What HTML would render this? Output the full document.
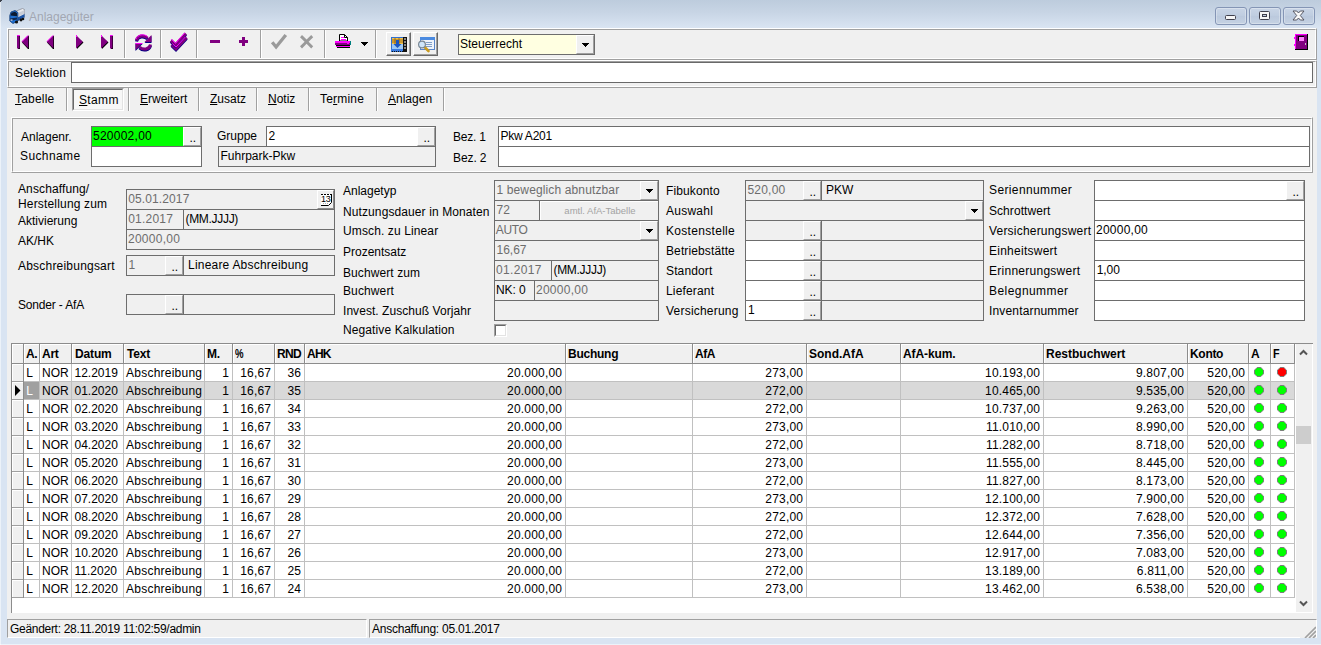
<!DOCTYPE html>
<html lang="de"><head><meta charset="utf-8"><title>Anlagegüter</title>
<style>
html,body{margin:0;padding:0;}
body{width:1321px;height:645px;overflow:hidden;position:relative;background:#d9e4f2;font-family:"Liberation Sans",sans-serif;font-size:12px;line-height:14px;color:#000;}
div,span,svg{position:absolute;box-sizing:content-box;}
.t,.g,.tb,.tab{white-space:nowrap;}
.tb{font-weight:bold;}
.f{border:1px solid #6d6d6d;overflow:hidden;background:#fff;}
.f span{top:2px;white-space:nowrap;}
.db{width:16px;height:17px;background:#f0f0f0;border:1px solid;border-color:#fff #a0a0a0 #a0a0a0 #fff;}
.dd{left:1.500px;right:0;top:3px;text-align:center;}
.ar{left:5px;top:7px;}
.po{border:1px solid;border-color:#fff #a0a0a0 #a0a0a0 #fff;}
.pi{border:1px solid;border-color:#a0a0a0 #fff #fff #a0a0a0;}
.sep{width:1px;background:#a0a0a0;border-right:1px solid #fff;}
.hl{height:1px;background:#c0c0c0;}
.vl{width:1px;background:#c0c0c0;}
.dot{width:10px;height:10px;}
.st{font-size:12px;line-height:16px;white-space:nowrap;}
</style></head><body>

<div style="left:0px;top:0px;width:1321px;height:28px;background:linear-gradient(#bdccdd,#c8d5e5 45%,#d9e4f2);"></div>
<div style="left:0px;top:0px;width:1px;height:645px;background:rgba(255,255,255,.5);"></div>
<div style="left:0px;top:644px;width:1321px;height:1px;background:rgba(255,255,255,.5);"></div>
<div style="left:0px;top:0px;width:2px;height:1px;background:#3a3f4a;"></div>
<div style="left:0px;top:1px;width:1px;height:1px;background:#3a3f4a;"></div>
<div style="left:7px;top:28px;width:1310px;height:610px;background:#f0f0f0;"></div>
<svg style="left:9px;top:8px" width="16" height="16" viewBox="0 0 16 16">
<path d="M6 3.500L13.500 .5l2 1v8l-7 3.500z" fill="#e8eaee" stroke="#8a8f99" stroke-width=".8"/>
<path d="M8.500 5.200l7-3.200v3.500l-7 3.500z" fill="#c9ced8"/>
<path d="M8.500 9.500l7-3.500v3.200l-7 3.800z" fill="#1c55a8"/>
<path d="M.8 7.500L2 4l4-1.500 2.800 1.800v8.700L4 15.500.8 13z" fill="#1f6fd0" stroke="#123a73" stroke-width=".8"/>
<path d="M1.500 7.500l1-2.800 3.500-1 2 1.500v3z" fill="#0c1a30"/>
<path d="M1 10.500l7-1v2l-7 1.500z" fill="#0f2a55"/>
<circle cx="7.500" cy="14" r="1.600" fill="#111"/><circle cx="12" cy="12" r="1.400" fill="#111"/><circle cx="14" cy="11" r="1.300" fill="#111"/>
<rect x="1.500" y="11.500" width="2" height="1.200" fill="#dfe9ff"/>
</svg>
<span style="left:29px;top:10px;font-size:12px;line-height:14px;color:#a2a7b2;white-space:nowrap;">Anlagegüter</span>
<div style="left:1215px;top:7px;width:30px;height:16px;border:1px solid #8495b5;border-radius:3px;background:linear-gradient(#c9d5e6,#bfcde0 48%,#bbc9dd 52%,#c5d2e3);box-shadow:inset 0 0 0 1px rgba(255,255,255,.3);"></div>
<div style="left:1249px;top:7px;width:30px;height:16px;border:1px solid #8495b5;border-radius:3px;background:linear-gradient(#c9d5e6,#bfcde0 48%,#bbc9dd 52%,#c5d2e3);box-shadow:inset 0 0 0 1px rgba(255,255,255,.3);"></div>
<div style="left:1283px;top:7px;width:30px;height:16px;border:1px solid #8495b5;border-radius:3px;background:linear-gradient(#c9d5e6,#bfcde0 48%,#bbc9dd 52%,#c5d2e3);box-shadow:inset 0 0 0 1px rgba(255,255,255,.3);"></div>
<div style="left:1225px;top:15px;width:9px;height:3px;border:1px solid #40404c;background:#f6f6f6;border-radius:1.500px;"></div>
<div style="left:1259px;top:11px;width:9px;height:7px;border:1px solid #40404c;background:#f6f6f6;border-radius:1.500px;"></div>
<div style="left:1262px;top:14px;width:3px;height:1px;border:1px solid #40404c;background:#c2cfe2;"></div>
<svg style="left:1292px;top:10px" width="13" height="11" viewBox="0 0 13 11"><path d="M1 1h3.700l1.800 2 1.800-2H12L8.300 5.500 12 10H8.300L6.500 8 4.700 10H1l3.700-4.500z" fill="#f8f8f8" stroke="#4a4a56" stroke-width=".9" stroke-linejoin="round"/></svg>
<div class="po" style="left:7px;top:28px;width:1308px;height:30px;"><div class="pi" style="left:0;top:0;width:1306px;height:28px;"></div></div>
<div class="sep" style="left:124px;top:30px;width:1px;height:28px;"></div>
<div class="sep" style="left:160px;top:30px;width:1px;height:28px;"></div>
<div class="sep" style="left:196px;top:30px;width:1px;height:28px;"></div>
<div class="sep" style="left:260px;top:30px;width:1px;height:28px;"></div>
<div class="sep" style="left:324px;top:30px;width:1px;height:28px;"></div>
<div class="sep" style="left:375px;top:30px;width:1px;height:28px;"></div>
<svg style="left:8px;top:30px" width="372" height="28" viewBox="8 30 372 28">
<g fill="#000">
<rect x="18" y="36" width="2" height="13"/><path d="M29 35.500v13.500h-1l-6-6.500z"/>
<path d="M54 35.500v13.500h-1l-6-6.500z"/>
<path d="M76 36.500l1 12.500 6.500-6.500z"/>
<path d="M101 36.500l1 12.500 6.500-6.500z"/><rect x="111" y="36" width="2" height="13"/>
</g>
<g fill="#800080">
<rect x="17" y="35" width="2.500" height="13.500"/><path d="M28.300 35.300v13l-6.500-6.500z"/>
<path d="M53.300 35.300v13l-6.500-6.500z"/>
<path d="M76 35v13.500l6.800-6.700z"/>
<path d="M101 35v13.500l6.800-6.700z"/><rect x="110" y="35" width="2.500" height="13.500"/>
<rect x="210" y="40" width="10" height="3"/>
<rect x="239" y="40" width="9" height="3"/><rect x="242" y="37" width="3" height="9"/>
</g>
<g fill="#ff00ff"><rect x="17" y="35" width="2.500" height="1"/><rect x="110" y="35" width="2.500" height="1"/></g>
<g stroke="#ff00ff" stroke-width="1" fill="none"><path d="M22 41.500l6-6"/><path d="M47 41.500l6-6"/><path d="M76.500 35v2"/><path d="M101.500 35v2"/></g>
<!-- refresh -->
<g transform="translate(135 34)">
<g transform="translate(0 1)" fill="none" stroke="#000080" stroke-width="3"><path d="M1.500 6.500C2.500 1.500 9 0.500 12.500 4"/><path d="M15.500 10.500C14.500 15.500 8 16.500 4.500 13"/></g>
<g transform="translate(0 1)" fill="#000080"><path d="M16.500 1v7h-7z"/><path d="M.5 16v-7h7z"/></g>
<g fill="none" stroke="#800080" stroke-width="3"><path d="M1.500 6.500C2.500 1.500 9 0.500 12.500 4"/><path d="M15.500 10.500C14.500 15.500 8 16.500 4.500 13"/></g>
<g fill="#800080"><path d="M16.500 1v7h-7z"/><path d="M.5 16v-7h7z"/></g>
<path d="M1 5C2.500 0.500 9 -0.500 12.500 2.500" fill="none" stroke="#ff00ff" stroke-width="1"/>
<path d="M.5 9.500h7" fill="none" stroke="#ff00ff" stroke-width="1"/>
</g>
<!-- double check -->
<g fill="none" stroke-width="3.200" stroke-linejoin="miter">
<path d="M171.700 45.500l4.300 4.300 10.500-11.500" stroke="#000080"/>
<path d="M171.700 44.500l4.300 4.300 10.500-11.500" stroke="#800080"/>
<path d="M171 41.500l4.500 4.500 10.300-11.500" stroke="#000080"/>
<path d="M171 40.500l4.500 4.500 10.300-11.500" stroke="#800080"/>
</g>
<g fill="none" stroke="#ff00ff" stroke-width="1"><path d="M171.300 39.200l4.200 4.200 9.300-10.500"/><path d="M172.500 43.800l3.500 3.300 9.500-10.300"/></g>
<!-- gray check / cross -->
<path d="M272.200 42.300l3.900 4.700 9.700-12" fill="none" stroke="#9a9a9a" stroke-width="3.300"/>
<path d="M300 37.200l2-2.200 4.600 4.600 4.600-4.600 2 2.200-4.600 4.500 4.600 4.500-2 2.200-4.600-4.600-4.600 4.600-2-2.200 4.600-4.500z" fill="#9a9a9a"/>
<!-- printer -->
<path d="M339.500 41v-6.500h5l3 3v3.500z" fill="#fff" stroke="#000" stroke-width="1"/>
<path d="M344.500 34.500v3h3" fill="none" stroke="#000" stroke-width="1"/>
<rect x="341" y="37" width="3" height="1" fill="#ff00ff"/><rect x="341" y="39" width="5" height="1" fill="#ff00ff"/>
<rect x="335" y="41" width="16" height="2" fill="#ff00ff"/>
<rect x="335" y="43" width="16" height="2" fill="#800080"/>
<rect x="347" y="43" width="2" height="1" fill="#ff00ff"/>
<rect x="350" y="41" width="1" height="4" fill="#008080"/>
<rect x="336" y="45" width="14" height="1" fill="#000"/>
<rect x="336" y="46" width="14" height="1" fill="#ff00ff"/>
<rect x="337" y="47" width="13" height="1" fill="#000"/>
<path d="M361 42h7v1h-7zM362 43h5v1h-5zM363 44h3v1h-3zM364 45h1v1h-1z" fill="#000" shape-rendering="crispEdges"/>
</svg>
<div style="left:386px;top:32px;width:23px;height:22px;border:1px solid;border-color:#fff #696969 #696969 #fff;background:#f0f0f0;box-shadow:inset -1px -1px 0 #a0a0a0;"></div>
<div style="left:413px;top:32px;width:23px;height:22px;border:1px solid;border-color:#fff #696969 #696969 #fff;background:#f0f0f0;box-shadow:inset -1px -1px 0 #a0a0a0;"></div>
<svg style="left:391px;top:37px" width="16" height="15" viewBox="0 0 16 15">
<rect x="0" y="0" width="16" height="15" fill="#2f6fd0"/>
<rect x="1" y="1" width="11" height="6" fill="#f2c14a"/>
<path d="M1 3h11M1 5h11M4 1v6M8 1v6" stroke="#8a5a10" stroke-width=".8"/>
<rect x="1" y="7" width="11" height="5" fill="#9cc8f5"/>
<path d="M5 3h3v4h2.500L6.500 11 2.500 7H5z" fill="#1a56c0"/>
<rect x="12" y="0" width="4" height="15" fill="#111"/>
<path d="M13 2h2M13 5h2M13 8h2M13 11h2" stroke="#fff" stroke-width="1"/>
<rect x="0" y="12" width="12" height="2" fill="#3a7be0"/>
<path d="M1 14.500h11" stroke="#111" stroke-width="1" stroke-dasharray="1 1"/>
</svg>
<svg style="left:417px;top:36px" width="18" height="17" viewBox="0 0 18 17">
<rect x="3.500" y="1.500" width="14" height="12" fill="#eef3fb" stroke="#5a86c8" stroke-width="1"/>
<rect x="3" y="1" width="15" height="3" fill="#4a8ae0"/>
<path d="M9 6.500h6M9 8.500h6M9 10.500h6" stroke="#7f9fc8" stroke-width="1"/>
<path d="M7 10.500l4.500 4.500" stroke="#c89a20" stroke-width="2.600" stroke-linecap="round"/>
<circle cx="5" cy="8.500" r="3.400" fill="#cfe6fb" stroke="#7a8794" stroke-width="1.200"/>
</svg>
<div class="f" style="left:458px;top:34px;width:135px;height:19px;background:#ffffe1;"><span style="left:1px;letter-spacing:0px;">Steuerrecht</span></div>
<div class="db" style="left:576px;top:35px;"><svg class="ar" width="7" height="4" viewBox="0 0 7 4" shape-rendering="crispEdges"><path d="M0 0h7v1H0zM1 1h5v1H1zM2 2h3v1H2zM3 3h1v1H3z" fill="#000"/></svg></div>
<svg style="left:1294px;top:34px" width="14" height="16" viewBox="0 0 14 16" shape-rendering="crispEdges">
<rect x="1" y="0" width="13" height="16" fill="#800080"/>
<rect x="1" y="0" width="1" height="15" fill="#ff00ff"/><rect x="1" y="0" width="12" height="1" fill="#ff00ff"/>
<rect x="13" y="0" width="1" height="16" fill="#000"/><rect x="1" y="15" width="13" height="1" fill="#000"/>
<rect x="0" y="3" width="1" height="2" fill="#ff00ff"/><rect x="0" y="10" width="1" height="2" fill="#ff00ff"/>
<rect x="4" y="2" width="6" height="5" fill="#000"/><rect x="5" y="3" width="5" height="4" fill="#ff80ff"/>
<rect x="11" y="9" width="1" height="2" fill="#c0c0c0"/>
</svg>
<div class="po" style="left:7px;top:60px;width:1308px;height:26px;"><div class="pi" style="left:0;top:0;width:1306px;height:24px;"></div></div>
<span class="t" style="left:15px;top:66px;letter-spacing:0.188px;">Selektion</span>
<div style="left:71px;top:62px;width:1240px;height:19px;border:1px solid #696969;background:#fff;"></div>
<span class="tab" style="left:15px;top:92px;letter-spacing:0.2px;"><u>T</u>abelle</span>
<span class="tab" style="left:140px;top:92px;letter-spacing:0px;"><u>E</u>rweitert</span>
<span class="tab" style="left:210px;top:92px;letter-spacing:0px;"><u>Z</u>usatz</span>
<span class="tab" style="left:268px;top:92px;letter-spacing:0px;"><u>N</u>otiz</span>
<span class="tab" style="left:320px;top:92px;letter-spacing:0.192px;">Te<u>r</u>mine</span>
<span class="tab" style="left:388px;top:92px;letter-spacing:0px;"><u>A</u>nlagen</span>
<div class="sep" style="left:66px;top:88px;width:1px;height:23px;"></div>
<div class="sep" style="left:128px;top:88px;width:1px;height:23px;"></div>
<div class="sep" style="left:198px;top:88px;width:1px;height:23px;"></div>
<div class="sep" style="left:256px;top:88px;width:1px;height:23px;"></div>
<div class="sep" style="left:308px;top:88px;width:1px;height:23px;"></div>
<div class="sep" style="left:376px;top:88px;width:1px;height:23px;"></div>
<div class="sep" style="left:443px;top:88px;width:1px;height:23px;"></div>
<div style="left:72px;top:88px;width:48px;height:19px;border:2px solid;border-color:#a0a0a0 #fff #fff #a0a0a0;background:#f7f7f7;"></div>
<div style="left:73px;top:89px;width:48px;height:19px;border:1px solid;border-color:#696969 #e3e3e3 #e3e3e3 #696969;"></div>
<span class="tab" style="left:79px;top:93px;letter-spacing:0.35px;"><u>S</u>tamm</span>
<div class="po" style="left:11px;top:117px;width:1300px;height:54px;"><div class="pi" style="left:0;top:0;width:1298px;height:52px;"></div></div>
<span class="t" style="left:21px;top:130px;letter-spacing:0px;">Anlagenr.</span>
<span class="t" style="left:20px;top:149px;letter-spacing:0.386px;">Suchname</span>
<div class="f" style="left:91px;top:126px;width:109px;height:19px;background:#00ff00;"><span style="left:1px;letter-spacing:0.25px;">520002,00</span></div>
<div class="db" style="left:183px;top:127px;"><span class="dd">..</span></div>
<div class="f" style="left:91px;top:146px;width:109px;height:19px;"></div>
<span class="t" style="left:217px;top:129px;letter-spacing:0px;">Gruppe</span>
<div class="f" style="left:266px;top:126px;width:168px;height:19px;"><span style="left:1.5px;">2</span></div>
<div class="db" style="left:417px;top:127px;"><span class="dd">..</span></div>
<div class="f" style="left:218px;top:146px;width:216px;height:19px;background:#f0f0f0;"><span style="left:1.5px;letter-spacing:0px;">Fuhrpark-Pkw</span></div>
<span class="t" style="left:453px;top:130px;letter-spacing:-0.2px;">Bez. 1</span>
<span class="t" style="left:453px;top:151px;letter-spacing:-0.1px;">Bez. 2</span>
<div class="f" style="left:498px;top:126px;width:810px;height:19px;"><span style="left:1.5px;letter-spacing:-0.243px;">Pkw A201</span></div>
<div class="f" style="left:498px;top:146px;width:810px;height:19px;"></div>
<span class="t" style="left:18px;top:182px;letter-spacing:0.118px;">Anschaffung/</span>
<span class="t" style="left:18px;top:197px;letter-spacing:0.171px;">Herstellung zum</span>
<span class="t" style="left:18px;top:214px;letter-spacing:0px;">Aktivierung</span>
<span class="t" style="left:18px;top:234px;letter-spacing:0px;">AK/HK</span>
<span class="t" style="left:18px;top:259px;letter-spacing:0.21px;">Abschreibungsart</span>
<span class="t" style="left:18px;top:298px;letter-spacing:-0.173px;">Sonder - AfA</span>
<div class="f" style="left:126px;top:189px;width:207px;height:19px;background:#f0f0f0;"><span style="color:#6d6d6d;left:1.2px;letter-spacing:0.12px;">05.01.2017</span></div>
<div style="left:317px;top:190px;width:15px;height:17px;background:#f0f0f0;border:1px solid;border-color:#fff #8a8a8a #8a8a8a #fff;"></div>
<svg style="left:321px;top:194px" width="11" height="12" viewBox="0 0 11 12">
<path d="M0 0h11v8.500L8 12H0z" fill="#fff"/>
<path d="M0 .5h11" stroke="#000" stroke-width="1" stroke-dasharray="2 1"/>
<path d="M10.500 0v8.500L7.500 11.500H0" fill="none" stroke="#000" stroke-width="1"/>
<path d="M2 9.500h5" stroke="#b0b0b0" stroke-width="1" stroke-dasharray="1 1"/>
<text x="0" y="8" font-family="Liberation Sans, sans-serif" font-size="9" letter-spacing="-.3" fill="#000">13</text>
</svg>
<div class="f" style="left:126px;top:209px;width:56px;height:19px;background:#f0f0f0;"><span style="color:#6d6d6d;left:1.2px;letter-spacing:0.213px;">01.2017</span></div>
<div class="f" style="left:183px;top:209px;width:150px;height:19px;background:#f0f0f0;"><span style="left:1.5px;letter-spacing:-0.312px;">(MM.JJJJ)</span></div>
<div class="f" style="left:126px;top:229px;width:207px;height:19px;background:#f0f0f0;"><span style="color:#6d6d6d;left:1px;letter-spacing:0.26px;">20000,00</span></div>
<div class="f" style="left:126px;top:255px;width:56px;height:19px;background:#f0f0f0;"><span style="color:#6d6d6d;left:1.5px;">1</span></div>
<div class="db" style="left:165px;top:256px;"><span class="dd">..</span></div>
<div class="f" style="left:183px;top:255px;width:150px;height:19px;background:#f0f0f0;"><span style="left:4px;letter-spacing:0.211px;">Lineare Abschreibung</span></div>
<div class="f" style="left:126px;top:294px;width:56px;height:19px;background:#f0f0f0;"></div>
<div class="db" style="left:165px;top:295px;"><span class="dd">..</span></div>
<div class="f" style="left:183px;top:294px;width:150px;height:19px;background:#f0f0f0;"></div>
<span class="t" style="left:343px;top:184px;letter-spacing:0px;">Anlagetyp</span>
<span class="t" style="left:343px;top:205px;letter-spacing:0.102px;">Nutzungsdauer in Monaten</span>
<span class="t" style="left:343px;top:224px;letter-spacing:0.117px;">Umsch. zu Linear</span>
<span class="t" style="left:343px;top:245px;letter-spacing:0px;">Prozentsatz</span>
<span class="t" style="left:343px;top:266px;letter-spacing:0.09px;">Buchwert zum</span>
<span class="t" style="left:343px;top:284px;letter-spacing:0.12px;">Buchwert</span>
<span class="t" style="left:343px;top:304px;letter-spacing:0.055px;">Invest. Zuschuß Vorjahr</span>
<span class="t" style="left:343px;top:323px;letter-spacing:0.105px;">Negative Kalkulation</span>
<div class="f" style="left:494px;top:180px;width:163px;height:19px;background:#f0f0f0;"><span style="color:#6d6d6d;left:1.5px;letter-spacing:0.127px;">1 beweglich abnutzbar</span></div>
<div class="db" style="left:640px;top:181px;"><svg class="ar" width="7" height="4" viewBox="0 0 7 4" shape-rendering="crispEdges"><path d="M0 0h7v1H0zM1 1h5v1H1zM2 2h3v1H2zM3 3h1v1H3z" fill="#000"/></svg></div>
<div class="f" style="left:494px;top:200px;width:44px;height:19px;background:#f0f0f0;"><span style="color:#6d6d6d;left:1.5px;letter-spacing:0.1px;">72</span></div>
<div class="f" style="left:539px;top:200px;width:118px;height:19px;background:#f0f0f0;"></div>
<div style="left:540px;top:201px;width:117px;height:18px;border-top:1px solid #fff;border-left:1px solid #fff;"></div>
<span style="left:541px;top:204px;width:118px;text-align:center;font-size:9.500px;line-height:14px;color:#a3a3a3;white-space:nowrap">amtl. AfA-Tabelle</span>
<div class="f" style="left:494px;top:220px;width:163px;height:19px;background:#f0f0f0;"><span style="color:#6d6d6d;left:0.7px;letter-spacing:-0.3px;">AUTO</span></div>
<div class="db" style="left:640px;top:221px;"><svg class="ar" width="7" height="4" viewBox="0 0 7 4" shape-rendering="crispEdges"><path d="M0 0h7v1H0zM1 1h5v1H1zM2 2h3v1H2zM3 3h1v1H3z" fill="#000"/></svg></div>
<div class="f" style="left:494px;top:240px;width:163px;height:19px;background:#f0f0f0;"><span style="color:#6d6d6d;left:1.5px;letter-spacing:0px;">16,67</span></div>
<div class="f" style="left:494px;top:260px;width:56px;height:19px;background:#f0f0f0;"><span style="color:#6d6d6d;left:0.9px;letter-spacing:0.36px;">01.2017</span></div>
<div class="f" style="left:551px;top:260px;width:106px;height:19px;background:#f0f0f0;"><span style="left:1.5px;letter-spacing:-0.312px;">(MM.JJJJ)</span></div>
<div class="f" style="left:494px;top:280px;width:39px;height:19px;background:#f0f0f0;"><span style="left:0.9px;letter-spacing:-0.075px;">NK: 0</span></div>
<div class="f" style="left:534px;top:280px;width:123px;height:19px;background:#f0f0f0;"><span style="color:#6d6d6d;left:1px;letter-spacing:0.26px;">20000,00</span></div>
<div class="f" style="left:494px;top:300px;width:163px;height:19px;background:#f0f0f0;"></div>
<div style="left:494px;top:324px;width:11px;height:11px;border:1px solid;border-color:#a0a0a0 #fff #fff #a0a0a0;"></div>
<div style="left:495px;top:325px;width:9px;height:9px;border:1px solid;border-color:#696969 #e3e3e3 #e3e3e3 #696969;background:#fff;"></div>
<span class="t" style="left:666px;top:184px;letter-spacing:0.12px;">Fibukonto</span>
<span class="t" style="left:666px;top:204px;letter-spacing:0.25px;">Auswahl</span>
<span class="t" style="left:666px;top:224px;letter-spacing:0.309px;">Kostenstelle</span>
<span class="t" style="left:666px;top:244px;letter-spacing:0.117px;">Betriebstätte</span>
<span class="t" style="left:666px;top:264px;letter-spacing:0.13px;">Standort</span>
<span class="t" style="left:666px;top:284px;letter-spacing:0.16px;">Lieferant</span>
<span class="t" style="left:666px;top:304px;letter-spacing:0.216px;">Versicherung</span>
<div class="f" style="left:745px;top:180px;width:75px;height:19px;background:#f0f0f0;"><span style="color:#6d6d6d;left:1.5px;letter-spacing:0.2px;">520,00</span></div>
<div class="db" style="left:803px;top:181px;"><span class="dd">..</span></div>
<div class="f" style="left:821px;top:180px;width:161px;height:19px;background:#f0f0f0;"><span style="left:4px;letter-spacing:0px;">PKW</span></div>
<div class="f" style="left:745px;top:200px;width:237px;height:19px;background:#f0f0f0;"></div>
<div class="db" style="left:965px;top:201px;"><svg class="ar" width="7" height="4" viewBox="0 0 7 4" shape-rendering="crispEdges"><path d="M0 0h7v1H0zM1 1h5v1H1zM2 2h3v1H2zM3 3h1v1H3z" fill="#000"/></svg></div>
<div class="f" style="left:745px;top:220px;width:75px;height:19px;background:#f0f0f0;"></div>
<div class="db" style="left:803px;top:221px;"><span class="dd">..</span></div>
<div class="f" style="left:821px;top:220px;width:161px;height:19px;background:#f0f0f0;"></div>
<div class="f" style="left:745px;top:240px;width:75px;height:19px;"></div>
<div class="db" style="left:803px;top:241px;"><span class="dd">..</span></div>
<div class="f" style="left:821px;top:240px;width:161px;height:19px;background:#f0f0f0;"></div>
<div class="f" style="left:745px;top:260px;width:75px;height:19px;"></div>
<div class="db" style="left:803px;top:261px;"><span class="dd">..</span></div>
<div class="f" style="left:821px;top:260px;width:161px;height:19px;background:#f0f0f0;"></div>
<div class="f" style="left:745px;top:280px;width:75px;height:19px;"></div>
<div class="db" style="left:803px;top:281px;"><span class="dd">..</span></div>
<div class="f" style="left:821px;top:280px;width:161px;height:19px;background:#f0f0f0;"></div>
<div class="f" style="left:745px;top:300px;width:75px;height:19px;"><span style="left:2px;">1</span></div>
<div class="db" style="left:803px;top:301px;"><span class="dd">..</span></div>
<div class="f" style="left:821px;top:300px;width:161px;height:19px;background:#f0f0f0;"></div>
<span class="t" style="left:989px;top:183px;letter-spacing:0.375px;">Seriennummer</span>
<div class="f" style="left:1094px;top:180px;width:209px;height:19px;"></div>
<span class="t" style="left:989px;top:204px;letter-spacing:0.06px;">Schrottwert</span>
<div class="f" style="left:1094px;top:200px;width:209px;height:19px;"></div>
<span class="t" style="left:989px;top:224px;letter-spacing:0.203px;">Versicherungswert</span>
<div class="f" style="left:1094px;top:220px;width:209px;height:19px;"><span style="left:1px;letter-spacing:0.24px;">20000,00</span></div>
<span class="t" style="left:989px;top:244px;letter-spacing:0.256px;">Einheitswert</span>
<div class="f" style="left:1094px;top:240px;width:209px;height:19px;"></div>
<span class="t" style="left:989px;top:264px;letter-spacing:0.261px;">Erinnerungswert</span>
<div class="f" style="left:1094px;top:260px;width:209px;height:19px;"><span style="left:1.8px;letter-spacing:-0.1px;">1,00</span></div>
<span class="t" style="left:989px;top:284px;letter-spacing:0.44px;">Belegnummer</span>
<div class="f" style="left:1094px;top:280px;width:209px;height:19px;"></div>
<span class="t" style="left:989px;top:304px;letter-spacing:0.165px;">Inventarnummer</span>
<div class="f" style="left:1094px;top:300px;width:209px;height:19px;"></div>
<div class="db" style="left:1286px;top:181px;"><span class="dd">..</span></div>
<div style="left:11px;top:343px;width:1301px;height:269px;background:#fff;border-top:1px solid #8c8c8c;border-left:1px solid #8c8c8c;"></div>
<div style="left:12px;top:344px;width:1282px;height:19px;background:#f0f0f0;border-top:1px solid #fff;height:18px;"></div>
<div style="left:12px;top:364px;width:11px;height:233px;background:#f0f0f0;"></div>
<div style="left:24px;top:382px;width:1270px;height:17px;background:#d9d9d9;"></div>
<div style="left:24px;top:382px;width:15px;height:17px;background:#a0a0a0;"></div>
<div style="left:12px;top:344px;width:1px;height:253px;background:#fff;"></div>
<div style="left:12px;top:363px;width:1283px;height:1px;background:#8c8c8c;"></div>
<div class="hl" style="left:24px;top:381px;width:1271px;height:1px;"></div>
<div style="left:12px;top:381px;width:12px;height:1px;background:#a0a0a0;"></div>
<div style="left:12px;top:382px;width:11px;height:1px;background:#fff;"></div>
<div class="hl" style="left:24px;top:399px;width:1271px;height:1px;"></div>
<div style="left:12px;top:399px;width:12px;height:1px;background:#a0a0a0;"></div>
<div style="left:12px;top:400px;width:11px;height:1px;background:#fff;"></div>
<div class="hl" style="left:24px;top:417px;width:1271px;height:1px;"></div>
<div style="left:12px;top:417px;width:12px;height:1px;background:#a0a0a0;"></div>
<div style="left:12px;top:418px;width:11px;height:1px;background:#fff;"></div>
<div class="hl" style="left:24px;top:435px;width:1271px;height:1px;"></div>
<div style="left:12px;top:435px;width:12px;height:1px;background:#a0a0a0;"></div>
<div style="left:12px;top:436px;width:11px;height:1px;background:#fff;"></div>
<div class="hl" style="left:24px;top:453px;width:1271px;height:1px;"></div>
<div style="left:12px;top:453px;width:12px;height:1px;background:#a0a0a0;"></div>
<div style="left:12px;top:454px;width:11px;height:1px;background:#fff;"></div>
<div class="hl" style="left:24px;top:471px;width:1271px;height:1px;"></div>
<div style="left:12px;top:471px;width:12px;height:1px;background:#a0a0a0;"></div>
<div style="left:12px;top:472px;width:11px;height:1px;background:#fff;"></div>
<div class="hl" style="left:24px;top:489px;width:1271px;height:1px;"></div>
<div style="left:12px;top:489px;width:12px;height:1px;background:#a0a0a0;"></div>
<div style="left:12px;top:490px;width:11px;height:1px;background:#fff;"></div>
<div class="hl" style="left:24px;top:507px;width:1271px;height:1px;"></div>
<div style="left:12px;top:507px;width:12px;height:1px;background:#a0a0a0;"></div>
<div style="left:12px;top:508px;width:11px;height:1px;background:#fff;"></div>
<div class="hl" style="left:24px;top:525px;width:1271px;height:1px;"></div>
<div style="left:12px;top:525px;width:12px;height:1px;background:#a0a0a0;"></div>
<div style="left:12px;top:526px;width:11px;height:1px;background:#fff;"></div>
<div class="hl" style="left:24px;top:543px;width:1271px;height:1px;"></div>
<div style="left:12px;top:543px;width:12px;height:1px;background:#a0a0a0;"></div>
<div style="left:12px;top:544px;width:11px;height:1px;background:#fff;"></div>
<div class="hl" style="left:24px;top:561px;width:1271px;height:1px;"></div>
<div style="left:12px;top:561px;width:12px;height:1px;background:#a0a0a0;"></div>
<div style="left:12px;top:562px;width:11px;height:1px;background:#fff;"></div>
<div class="hl" style="left:24px;top:579px;width:1271px;height:1px;"></div>
<div style="left:12px;top:579px;width:12px;height:1px;background:#a0a0a0;"></div>
<div style="left:12px;top:580px;width:11px;height:1px;background:#fff;"></div>
<div class="hl" style="left:24px;top:597px;width:1271px;height:1px;"></div>
<div style="left:12px;top:597px;width:12px;height:1px;background:#a0a0a0;"></div>
<div style="left:12px;top:364px;width:11px;height:1px;background:#fff;"></div>
<div style="left:23px;top:344px;width:1px;height:19px;background:#8c8c8c;border-right:1px solid #fff;"></div>
<div style="left:23px;top:364px;width:1px;height:234px;background:#8c8c8c;"></div>
<div style="left:39px;top:344px;width:1px;height:19px;background:#8c8c8c;border-right:1px solid #fff;"></div>
<div class="vl" style="left:39px;top:364px;width:1px;height:234px;"></div>
<div style="left:71px;top:344px;width:1px;height:19px;background:#8c8c8c;border-right:1px solid #fff;"></div>
<div class="vl" style="left:71px;top:364px;width:1px;height:234px;"></div>
<div style="left:123px;top:344px;width:1px;height:19px;background:#8c8c8c;border-right:1px solid #fff;"></div>
<div class="vl" style="left:123px;top:364px;width:1px;height:234px;"></div>
<div style="left:204px;top:344px;width:1px;height:19px;background:#8c8c8c;border-right:1px solid #fff;"></div>
<div class="vl" style="left:204px;top:364px;width:1px;height:234px;"></div>
<div style="left:232px;top:344px;width:1px;height:19px;background:#8c8c8c;border-right:1px solid #fff;"></div>
<div class="vl" style="left:232px;top:364px;width:1px;height:234px;"></div>
<div style="left:274px;top:344px;width:1px;height:19px;background:#8c8c8c;border-right:1px solid #fff;"></div>
<div class="vl" style="left:274px;top:364px;width:1px;height:234px;"></div>
<div style="left:304px;top:344px;width:1px;height:19px;background:#8c8c8c;border-right:1px solid #fff;"></div>
<div class="vl" style="left:304px;top:364px;width:1px;height:234px;"></div>
<div style="left:565px;top:344px;width:1px;height:19px;background:#8c8c8c;border-right:1px solid #fff;"></div>
<div class="vl" style="left:565px;top:364px;width:1px;height:234px;"></div>
<div style="left:692px;top:344px;width:1px;height:19px;background:#8c8c8c;border-right:1px solid #fff;"></div>
<div class="vl" style="left:692px;top:364px;width:1px;height:234px;"></div>
<div style="left:806px;top:344px;width:1px;height:19px;background:#8c8c8c;border-right:1px solid #fff;"></div>
<div class="vl" style="left:806px;top:364px;width:1px;height:234px;"></div>
<div style="left:900px;top:344px;width:1px;height:19px;background:#8c8c8c;border-right:1px solid #fff;"></div>
<div class="vl" style="left:900px;top:364px;width:1px;height:234px;"></div>
<div style="left:1043px;top:344px;width:1px;height:19px;background:#8c8c8c;border-right:1px solid #fff;"></div>
<div class="vl" style="left:1043px;top:364px;width:1px;height:234px;"></div>
<div style="left:1187px;top:344px;width:1px;height:19px;background:#8c8c8c;border-right:1px solid #fff;"></div>
<div class="vl" style="left:1187px;top:364px;width:1px;height:234px;"></div>
<div style="left:1248px;top:344px;width:1px;height:19px;background:#8c8c8c;border-right:1px solid #fff;"></div>
<div class="vl" style="left:1248px;top:364px;width:1px;height:234px;"></div>
<div style="left:1270px;top:344px;width:1px;height:19px;background:#8c8c8c;border-right:1px solid #fff;"></div>
<div class="vl" style="left:1270px;top:364px;width:1px;height:234px;"></div>
<div style="left:1294px;top:344px;width:1px;height:19px;background:#8c8c8c;"></div>
<div class="vl" style="left:1294px;top:364px;width:1px;height:234px;"></div>
<span class="tb" style="left:26px;top:347px;letter-spacing:-0.3px;">A.</span>
<span class="tb" style="left:42px;top:347px;letter-spacing:-0.25px;">Art</span>
<span class="tb" style="left:75px;top:347px;letter-spacing:-0.15px;">Datum</span>
<span class="tb" style="left:127px;top:347px;letter-spacing:-0.15px;">Text</span>
<span class="tb" style="left:207px;top:347px;letter-spacing:-0.3px;">M.</span>
<span class="tb" style="left:235px;top:347px;transform:scaleX(.8);transform-origin:0 0;">%</span>
<span class="tb" style="left:277px;top:347px;letter-spacing:-0.7px;">RND</span>
<span class="tb" style="left:307px;top:347px;letter-spacing:-0.75px;">AHK</span>
<span class="tb" style="left:568px;top:347px;letter-spacing:-0.25px;">Buchung</span>
<span class="tb" style="left:695px;top:347px;letter-spacing:-0.4px;">AfA</span>
<span class="tb" style="left:809px;top:347px;">Sond.AfA</span>
<span class="tb" style="left:903px;top:347px;letter-spacing:-0.1px;">AfA-kum.</span>
<span class="tb" style="left:1046px;top:347px;">Restbuchwert</span>
<span class="tb" style="left:1190px;top:347px;letter-spacing:-0.3px;">Konto</span>
<span class="tb" style="left:1251px;top:347px;">A</span>
<span class="tb" style="left:1273px;top:347px;transform:scaleX(.9);transform-origin:0 0;">F</span>
<span class="g" style="left:26.2px;top:366px;">L</span>
<span class="g" style="left:42.1px;top:366px;">NOR</span>
<span class="g" style="left:74.5px;top:366px;letter-spacing:0.0px;">12.2019</span>
<span class="g" style="left:126px;top:366px;letter-spacing:0.241px;">Abschreibung</span>
<span class="g" style="right:1091.8px;top:366px;letter-spacing:0.2px;">1</span>
<span class="g" style="right:1049.8px;top:366px;letter-spacing:0.2px;">16,67</span>
<span class="g" style="right:1019.8px;top:366px;letter-spacing:0.2px;">36</span>
<span class="g" style="right:758.8px;top:366px;letter-spacing:0.2px;">20.000,00</span>
<span class="g" style="right:517.8px;top:366px;letter-spacing:0.2px;">273,00</span>
<span class="g" style="right:280.79999999999995px;top:366px;letter-spacing:0.2px;">10.193,00</span>
<span class="g" style="right:136.79999999999995px;top:366px;letter-spacing:0.2px;">9.807,00</span>
<span class="g" style="right:75.79999999999995px;top:366px;letter-spacing:0.2px;">520,00</span>
<svg class="dot" style="left:1254px;top:367px" viewBox="0 0 10 10"><path d="M3.200 .5h3.600l2.700 2.700v3.600l-2.700 2.700h-3.600L.5 6.800V3.200z" fill="#00ff00" stroke="#7c7c7c" stroke-width="1"/></svg>
<svg class="dot" style="left:1277px;top:367px" viewBox="0 0 10 10"><path d="M3.200 .5h3.600l2.700 2.700v3.600l-2.700 2.700h-3.600L.5 6.800V3.200z" fill="#ff0000" stroke="#7c7c7c" stroke-width="1"/></svg>
<span class="g" style="left:26.2px;top:384px;color:#fff">L</span>
<span class="g" style="left:42.1px;top:384px;">NOR</span>
<span class="g" style="left:74.5px;top:384px;letter-spacing:0.0px;">01.2020</span>
<span class="g" style="left:126px;top:384px;letter-spacing:0.241px;">Abschreibung</span>
<span class="g" style="right:1091.8px;top:384px;letter-spacing:0.2px;">1</span>
<span class="g" style="right:1049.8px;top:384px;letter-spacing:0.2px;">16,67</span>
<span class="g" style="right:1019.8px;top:384px;letter-spacing:0.2px;">35</span>
<span class="g" style="right:758.8px;top:384px;letter-spacing:0.2px;">20.000,00</span>
<span class="g" style="right:517.8px;top:384px;letter-spacing:0.2px;">272,00</span>
<span class="g" style="right:280.79999999999995px;top:384px;letter-spacing:0.2px;">10.465,00</span>
<span class="g" style="right:136.79999999999995px;top:384px;letter-spacing:0.2px;">9.535,00</span>
<span class="g" style="right:75.79999999999995px;top:384px;letter-spacing:0.2px;">520,00</span>
<svg class="dot" style="left:1254px;top:385px" viewBox="0 0 10 10"><path d="M3.200 .5h3.600l2.700 2.700v3.600l-2.700 2.700h-3.600L.5 6.800V3.200z" fill="#00ff00" stroke="#7c7c7c" stroke-width="1"/></svg>
<svg class="dot" style="left:1277px;top:385px" viewBox="0 0 10 10"><path d="M3.200 .5h3.600l2.700 2.700v3.600l-2.700 2.700h-3.600L.5 6.800V3.200z" fill="#00ff00" stroke="#7c7c7c" stroke-width="1"/></svg>
<span class="g" style="left:26.2px;top:402px;">L</span>
<span class="g" style="left:42.1px;top:402px;">NOR</span>
<span class="g" style="left:74.5px;top:402px;letter-spacing:0.0px;">02.2020</span>
<span class="g" style="left:126px;top:402px;letter-spacing:0.241px;">Abschreibung</span>
<span class="g" style="right:1091.8px;top:402px;letter-spacing:0.2px;">1</span>
<span class="g" style="right:1049.8px;top:402px;letter-spacing:0.2px;">16,67</span>
<span class="g" style="right:1019.8px;top:402px;letter-spacing:0.2px;">34</span>
<span class="g" style="right:758.8px;top:402px;letter-spacing:0.2px;">20.000,00</span>
<span class="g" style="right:517.8px;top:402px;letter-spacing:0.2px;">272,00</span>
<span class="g" style="right:280.79999999999995px;top:402px;letter-spacing:0.2px;">10.737,00</span>
<span class="g" style="right:136.79999999999995px;top:402px;letter-spacing:0.2px;">9.263,00</span>
<span class="g" style="right:75.79999999999995px;top:402px;letter-spacing:0.2px;">520,00</span>
<svg class="dot" style="left:1254px;top:403px" viewBox="0 0 10 10"><path d="M3.200 .5h3.600l2.700 2.700v3.600l-2.700 2.700h-3.600L.5 6.800V3.200z" fill="#00ff00" stroke="#7c7c7c" stroke-width="1"/></svg>
<svg class="dot" style="left:1277px;top:403px" viewBox="0 0 10 10"><path d="M3.200 .5h3.600l2.700 2.700v3.600l-2.700 2.700h-3.600L.5 6.800V3.200z" fill="#00ff00" stroke="#7c7c7c" stroke-width="1"/></svg>
<span class="g" style="left:26.2px;top:420px;">L</span>
<span class="g" style="left:42.1px;top:420px;">NOR</span>
<span class="g" style="left:74.5px;top:420px;letter-spacing:0.0px;">03.2020</span>
<span class="g" style="left:126px;top:420px;letter-spacing:0.241px;">Abschreibung</span>
<span class="g" style="right:1091.8px;top:420px;letter-spacing:0.2px;">1</span>
<span class="g" style="right:1049.8px;top:420px;letter-spacing:0.2px;">16,67</span>
<span class="g" style="right:1019.8px;top:420px;letter-spacing:0.2px;">33</span>
<span class="g" style="right:758.8px;top:420px;letter-spacing:0.2px;">20.000,00</span>
<span class="g" style="right:517.8px;top:420px;letter-spacing:0.2px;">273,00</span>
<span class="g" style="right:280.79999999999995px;top:420px;letter-spacing:0.2px;">11.010,00</span>
<span class="g" style="right:136.79999999999995px;top:420px;letter-spacing:0.2px;">8.990,00</span>
<span class="g" style="right:75.79999999999995px;top:420px;letter-spacing:0.2px;">520,00</span>
<svg class="dot" style="left:1254px;top:421px" viewBox="0 0 10 10"><path d="M3.200 .5h3.600l2.700 2.700v3.600l-2.700 2.700h-3.600L.5 6.800V3.200z" fill="#00ff00" stroke="#7c7c7c" stroke-width="1"/></svg>
<svg class="dot" style="left:1277px;top:421px" viewBox="0 0 10 10"><path d="M3.200 .5h3.600l2.700 2.700v3.600l-2.700 2.700h-3.600L.5 6.800V3.200z" fill="#00ff00" stroke="#7c7c7c" stroke-width="1"/></svg>
<span class="g" style="left:26.2px;top:438px;">L</span>
<span class="g" style="left:42.1px;top:438px;">NOR</span>
<span class="g" style="left:74.5px;top:438px;letter-spacing:0.0px;">04.2020</span>
<span class="g" style="left:126px;top:438px;letter-spacing:0.241px;">Abschreibung</span>
<span class="g" style="right:1091.8px;top:438px;letter-spacing:0.2px;">1</span>
<span class="g" style="right:1049.8px;top:438px;letter-spacing:0.2px;">16,67</span>
<span class="g" style="right:1019.8px;top:438px;letter-spacing:0.2px;">32</span>
<span class="g" style="right:758.8px;top:438px;letter-spacing:0.2px;">20.000,00</span>
<span class="g" style="right:517.8px;top:438px;letter-spacing:0.2px;">272,00</span>
<span class="g" style="right:280.79999999999995px;top:438px;letter-spacing:0.2px;">11.282,00</span>
<span class="g" style="right:136.79999999999995px;top:438px;letter-spacing:0.2px;">8.718,00</span>
<span class="g" style="right:75.79999999999995px;top:438px;letter-spacing:0.2px;">520,00</span>
<svg class="dot" style="left:1254px;top:439px" viewBox="0 0 10 10"><path d="M3.200 .5h3.600l2.700 2.700v3.600l-2.700 2.700h-3.600L.5 6.800V3.200z" fill="#00ff00" stroke="#7c7c7c" stroke-width="1"/></svg>
<svg class="dot" style="left:1277px;top:439px" viewBox="0 0 10 10"><path d="M3.200 .5h3.600l2.700 2.700v3.600l-2.700 2.700h-3.600L.5 6.800V3.200z" fill="#00ff00" stroke="#7c7c7c" stroke-width="1"/></svg>
<span class="g" style="left:26.2px;top:456px;">L</span>
<span class="g" style="left:42.1px;top:456px;">NOR</span>
<span class="g" style="left:74.5px;top:456px;letter-spacing:0.0px;">05.2020</span>
<span class="g" style="left:126px;top:456px;letter-spacing:0.241px;">Abschreibung</span>
<span class="g" style="right:1091.8px;top:456px;letter-spacing:0.2px;">1</span>
<span class="g" style="right:1049.8px;top:456px;letter-spacing:0.2px;">16,67</span>
<span class="g" style="right:1019.8px;top:456px;letter-spacing:0.2px;">31</span>
<span class="g" style="right:758.8px;top:456px;letter-spacing:0.2px;">20.000,00</span>
<span class="g" style="right:517.8px;top:456px;letter-spacing:0.2px;">273,00</span>
<span class="g" style="right:280.79999999999995px;top:456px;letter-spacing:0.2px;">11.555,00</span>
<span class="g" style="right:136.79999999999995px;top:456px;letter-spacing:0.2px;">8.445,00</span>
<span class="g" style="right:75.79999999999995px;top:456px;letter-spacing:0.2px;">520,00</span>
<svg class="dot" style="left:1254px;top:457px" viewBox="0 0 10 10"><path d="M3.200 .5h3.600l2.700 2.700v3.600l-2.700 2.700h-3.600L.5 6.800V3.200z" fill="#00ff00" stroke="#7c7c7c" stroke-width="1"/></svg>
<svg class="dot" style="left:1277px;top:457px" viewBox="0 0 10 10"><path d="M3.200 .5h3.600l2.700 2.700v3.600l-2.700 2.700h-3.600L.5 6.800V3.200z" fill="#00ff00" stroke="#7c7c7c" stroke-width="1"/></svg>
<span class="g" style="left:26.2px;top:474px;">L</span>
<span class="g" style="left:42.1px;top:474px;">NOR</span>
<span class="g" style="left:74.5px;top:474px;letter-spacing:0.0px;">06.2020</span>
<span class="g" style="left:126px;top:474px;letter-spacing:0.241px;">Abschreibung</span>
<span class="g" style="right:1091.8px;top:474px;letter-spacing:0.2px;">1</span>
<span class="g" style="right:1049.8px;top:474px;letter-spacing:0.2px;">16,67</span>
<span class="g" style="right:1019.8px;top:474px;letter-spacing:0.2px;">30</span>
<span class="g" style="right:758.8px;top:474px;letter-spacing:0.2px;">20.000,00</span>
<span class="g" style="right:517.8px;top:474px;letter-spacing:0.2px;">272,00</span>
<span class="g" style="right:280.79999999999995px;top:474px;letter-spacing:0.2px;">11.827,00</span>
<span class="g" style="right:136.79999999999995px;top:474px;letter-spacing:0.2px;">8.173,00</span>
<span class="g" style="right:75.79999999999995px;top:474px;letter-spacing:0.2px;">520,00</span>
<svg class="dot" style="left:1254px;top:475px" viewBox="0 0 10 10"><path d="M3.200 .5h3.600l2.700 2.700v3.600l-2.700 2.700h-3.600L.5 6.800V3.200z" fill="#00ff00" stroke="#7c7c7c" stroke-width="1"/></svg>
<svg class="dot" style="left:1277px;top:475px" viewBox="0 0 10 10"><path d="M3.200 .5h3.600l2.700 2.700v3.600l-2.700 2.700h-3.600L.5 6.800V3.200z" fill="#00ff00" stroke="#7c7c7c" stroke-width="1"/></svg>
<span class="g" style="left:26.2px;top:492px;">L</span>
<span class="g" style="left:42.1px;top:492px;">NOR</span>
<span class="g" style="left:74.5px;top:492px;letter-spacing:0.0px;">07.2020</span>
<span class="g" style="left:126px;top:492px;letter-spacing:0.241px;">Abschreibung</span>
<span class="g" style="right:1091.8px;top:492px;letter-spacing:0.2px;">1</span>
<span class="g" style="right:1049.8px;top:492px;letter-spacing:0.2px;">16,67</span>
<span class="g" style="right:1019.8px;top:492px;letter-spacing:0.2px;">29</span>
<span class="g" style="right:758.8px;top:492px;letter-spacing:0.2px;">20.000,00</span>
<span class="g" style="right:517.8px;top:492px;letter-spacing:0.2px;">273,00</span>
<span class="g" style="right:280.79999999999995px;top:492px;letter-spacing:0.2px;">12.100,00</span>
<span class="g" style="right:136.79999999999995px;top:492px;letter-spacing:0.2px;">7.900,00</span>
<span class="g" style="right:75.79999999999995px;top:492px;letter-spacing:0.2px;">520,00</span>
<svg class="dot" style="left:1254px;top:493px" viewBox="0 0 10 10"><path d="M3.200 .5h3.600l2.700 2.700v3.600l-2.700 2.700h-3.600L.5 6.800V3.200z" fill="#00ff00" stroke="#7c7c7c" stroke-width="1"/></svg>
<svg class="dot" style="left:1277px;top:493px" viewBox="0 0 10 10"><path d="M3.200 .5h3.600l2.700 2.700v3.600l-2.700 2.700h-3.600L.5 6.800V3.200z" fill="#00ff00" stroke="#7c7c7c" stroke-width="1"/></svg>
<span class="g" style="left:26.2px;top:510px;">L</span>
<span class="g" style="left:42.1px;top:510px;">NOR</span>
<span class="g" style="left:74.5px;top:510px;letter-spacing:0.0px;">08.2020</span>
<span class="g" style="left:126px;top:510px;letter-spacing:0.241px;">Abschreibung</span>
<span class="g" style="right:1091.8px;top:510px;letter-spacing:0.2px;">1</span>
<span class="g" style="right:1049.8px;top:510px;letter-spacing:0.2px;">16,67</span>
<span class="g" style="right:1019.8px;top:510px;letter-spacing:0.2px;">28</span>
<span class="g" style="right:758.8px;top:510px;letter-spacing:0.2px;">20.000,00</span>
<span class="g" style="right:517.8px;top:510px;letter-spacing:0.2px;">272,00</span>
<span class="g" style="right:280.79999999999995px;top:510px;letter-spacing:0.2px;">12.372,00</span>
<span class="g" style="right:136.79999999999995px;top:510px;letter-spacing:0.2px;">7.628,00</span>
<span class="g" style="right:75.79999999999995px;top:510px;letter-spacing:0.2px;">520,00</span>
<svg class="dot" style="left:1254px;top:511px" viewBox="0 0 10 10"><path d="M3.200 .5h3.600l2.700 2.700v3.600l-2.700 2.700h-3.600L.5 6.800V3.200z" fill="#00ff00" stroke="#7c7c7c" stroke-width="1"/></svg>
<svg class="dot" style="left:1277px;top:511px" viewBox="0 0 10 10"><path d="M3.200 .5h3.600l2.700 2.700v3.600l-2.700 2.700h-3.600L.5 6.800V3.200z" fill="#00ff00" stroke="#7c7c7c" stroke-width="1"/></svg>
<span class="g" style="left:26.2px;top:528px;">L</span>
<span class="g" style="left:42.1px;top:528px;">NOR</span>
<span class="g" style="left:74.5px;top:528px;letter-spacing:0.0px;">09.2020</span>
<span class="g" style="left:126px;top:528px;letter-spacing:0.241px;">Abschreibung</span>
<span class="g" style="right:1091.8px;top:528px;letter-spacing:0.2px;">1</span>
<span class="g" style="right:1049.8px;top:528px;letter-spacing:0.2px;">16,67</span>
<span class="g" style="right:1019.8px;top:528px;letter-spacing:0.2px;">27</span>
<span class="g" style="right:758.8px;top:528px;letter-spacing:0.2px;">20.000,00</span>
<span class="g" style="right:517.8px;top:528px;letter-spacing:0.2px;">272,00</span>
<span class="g" style="right:280.79999999999995px;top:528px;letter-spacing:0.2px;">12.644,00</span>
<span class="g" style="right:136.79999999999995px;top:528px;letter-spacing:0.2px;">7.356,00</span>
<span class="g" style="right:75.79999999999995px;top:528px;letter-spacing:0.2px;">520,00</span>
<svg class="dot" style="left:1254px;top:529px" viewBox="0 0 10 10"><path d="M3.200 .5h3.600l2.700 2.700v3.600l-2.700 2.700h-3.600L.5 6.800V3.200z" fill="#00ff00" stroke="#7c7c7c" stroke-width="1"/></svg>
<svg class="dot" style="left:1277px;top:529px" viewBox="0 0 10 10"><path d="M3.200 .5h3.600l2.700 2.700v3.600l-2.700 2.700h-3.600L.5 6.800V3.200z" fill="#00ff00" stroke="#7c7c7c" stroke-width="1"/></svg>
<span class="g" style="left:26.2px;top:546px;">L</span>
<span class="g" style="left:42.1px;top:546px;">NOR</span>
<span class="g" style="left:74.5px;top:546px;letter-spacing:0.0px;">10.2020</span>
<span class="g" style="left:126px;top:546px;letter-spacing:0.241px;">Abschreibung</span>
<span class="g" style="right:1091.8px;top:546px;letter-spacing:0.2px;">1</span>
<span class="g" style="right:1049.8px;top:546px;letter-spacing:0.2px;">16,67</span>
<span class="g" style="right:1019.8px;top:546px;letter-spacing:0.2px;">26</span>
<span class="g" style="right:758.8px;top:546px;letter-spacing:0.2px;">20.000,00</span>
<span class="g" style="right:517.8px;top:546px;letter-spacing:0.2px;">273,00</span>
<span class="g" style="right:280.79999999999995px;top:546px;letter-spacing:0.2px;">12.917,00</span>
<span class="g" style="right:136.79999999999995px;top:546px;letter-spacing:0.2px;">7.083,00</span>
<span class="g" style="right:75.79999999999995px;top:546px;letter-spacing:0.2px;">520,00</span>
<svg class="dot" style="left:1254px;top:547px" viewBox="0 0 10 10"><path d="M3.200 .5h3.600l2.700 2.700v3.600l-2.700 2.700h-3.600L.5 6.800V3.200z" fill="#00ff00" stroke="#7c7c7c" stroke-width="1"/></svg>
<svg class="dot" style="left:1277px;top:547px" viewBox="0 0 10 10"><path d="M3.200 .5h3.600l2.700 2.700v3.600l-2.700 2.700h-3.600L.5 6.800V3.200z" fill="#00ff00" stroke="#7c7c7c" stroke-width="1"/></svg>
<span class="g" style="left:26.2px;top:564px;">L</span>
<span class="g" style="left:42.1px;top:564px;">NOR</span>
<span class="g" style="left:74.5px;top:564px;letter-spacing:0.0px;">11.2020</span>
<span class="g" style="left:126px;top:564px;letter-spacing:0.241px;">Abschreibung</span>
<span class="g" style="right:1091.8px;top:564px;letter-spacing:0.2px;">1</span>
<span class="g" style="right:1049.8px;top:564px;letter-spacing:0.2px;">16,67</span>
<span class="g" style="right:1019.8px;top:564px;letter-spacing:0.2px;">25</span>
<span class="g" style="right:758.8px;top:564px;letter-spacing:0.2px;">20.000,00</span>
<span class="g" style="right:517.8px;top:564px;letter-spacing:0.2px;">272,00</span>
<span class="g" style="right:280.79999999999995px;top:564px;letter-spacing:0.2px;">13.189,00</span>
<span class="g" style="right:136.79999999999995px;top:564px;letter-spacing:0.2px;">6.811,00</span>
<span class="g" style="right:75.79999999999995px;top:564px;letter-spacing:0.2px;">520,00</span>
<svg class="dot" style="left:1254px;top:565px" viewBox="0 0 10 10"><path d="M3.200 .5h3.600l2.700 2.700v3.600l-2.700 2.700h-3.600L.5 6.800V3.200z" fill="#00ff00" stroke="#7c7c7c" stroke-width="1"/></svg>
<svg class="dot" style="left:1277px;top:565px" viewBox="0 0 10 10"><path d="M3.200 .5h3.600l2.700 2.700v3.600l-2.700 2.700h-3.600L.5 6.800V3.200z" fill="#00ff00" stroke="#7c7c7c" stroke-width="1"/></svg>
<span class="g" style="left:26.2px;top:582px;">L</span>
<span class="g" style="left:42.1px;top:582px;">NOR</span>
<span class="g" style="left:74.5px;top:582px;letter-spacing:0.0px;">12.2020</span>
<span class="g" style="left:126px;top:582px;letter-spacing:0.241px;">Abschreibung</span>
<span class="g" style="right:1091.8px;top:582px;letter-spacing:0.2px;">1</span>
<span class="g" style="right:1049.8px;top:582px;letter-spacing:0.2px;">16,67</span>
<span class="g" style="right:1019.8px;top:582px;letter-spacing:0.2px;">24</span>
<span class="g" style="right:758.8px;top:582px;letter-spacing:0.2px;">20.000,00</span>
<span class="g" style="right:517.8px;top:582px;letter-spacing:0.2px;">273,00</span>
<span class="g" style="right:280.79999999999995px;top:582px;letter-spacing:0.2px;">13.462,00</span>
<span class="g" style="right:136.79999999999995px;top:582px;letter-spacing:0.2px;">6.538,00</span>
<span class="g" style="right:75.79999999999995px;top:582px;letter-spacing:0.2px;">520,00</span>
<svg class="dot" style="left:1254px;top:583px" viewBox="0 0 10 10"><path d="M3.200 .5h3.600l2.700 2.700v3.600l-2.700 2.700h-3.600L.5 6.800V3.200z" fill="#00ff00" stroke="#7c7c7c" stroke-width="1"/></svg>
<svg class="dot" style="left:1277px;top:583px" viewBox="0 0 10 10"><path d="M3.200 .5h3.600l2.700 2.700v3.600l-2.700 2.700h-3.600L.5 6.800V3.200z" fill="#00ff00" stroke="#7c7c7c" stroke-width="1"/></svg>
<svg style="left:15px;top:385px" width="6" height="11" viewBox="0 0 6 11"><path d="M0 0l5.500 5.500L0 11z" fill="#000"/></svg>
<div style="left:1296px;top:344px;width:16px;height:268px;background:#f0f0f0;"></div>
<div style="left:1296px;top:426px;width:15px;height:18px;background:#cdcdcd;"></div>
<svg style="left:1299px;top:349px" width="9" height="7" viewBox="0 0 9 7"><path d="M1 5.500L4.500 2l3.500 3.500" fill="none" stroke="#555" stroke-width="2"/></svg>
<svg style="left:1299px;top:600px" width="9" height="7" viewBox="0 0 9 7"><path d="M1 1.500L4.500 5l3.500-3.500" fill="none" stroke="#555" stroke-width="2"/></svg>
<div style="left:7px;top:619px;width:358px;height:17px;border:1px solid;border-color:#a0a0a0 #fff #fff #a0a0a0;"></div>
<div style="left:369px;top:619px;width:946px;height:17px;border:1px solid;border-color:#a0a0a0 #fff #f0f0f0 #a0a0a0;"></div>
<div style="left:370px;top:637px;width:930px;height:1px;background:#fff;"></div>
<span class="st" style="left:10px;top:621px;letter-spacing:-0.299px;">Geändert: 28.11.2019 11:02:59/admin</span>
<span class="st" style="left:372px;top:621px;letter-spacing:-0.239px;">Anschaffung: 05.01.2017</span>
<svg style="left:1303px;top:625px" width="13" height="13" viewBox="0 0 13 13"><path d="M2 13L13 2M6 13l7-7M10 13l3-3" stroke="#a0a0a0" stroke-width="1.600" fill="none"/></svg>
</body></html>
